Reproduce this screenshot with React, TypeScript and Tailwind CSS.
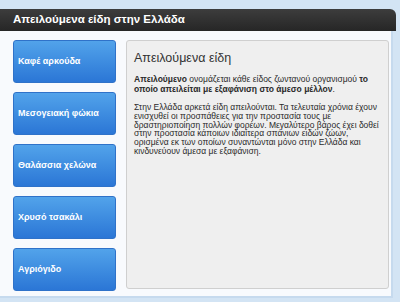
export default function App() {
  const items = ["Καφέ αρκούδα", "Μεσογειακή φώκια", "Θαλάσσια χελώνα", "Χρυσό τσακάλι", "Αγριόγιδο"];

  return (
    <div className="h-[302px] w-[400px] overflow-hidden bg-[#d3e4f4] pt-[9px] pr-[4px] font-['Liberation_Sans',Arial,sans-serif]">
      <div className="flex h-[22px] items-center rounded-tr-[6px] bg-gradient-to-b from-[#3d3d3d] to-[#262626] pl-[13px]">
        <h1 className="text-[11.5px] font-bold text-white">Απειλούμενα είδη στην Ελλάδα</h1>
      </div>
      <div className="mr-[3px] flex h-[267px] gap-[10px] border-b-[2px] border-r-[2px] border-[#c6daee] bg-[#f8fafd] pl-[13px] pt-[9px]">
        <div className="flex w-[103px] flex-col gap-[9px]">
          {items.map((name) => (
            <button
              key={name}
              className="flex h-[43px] items-center rounded-[3px] border border-[#2f72c9] bg-gradient-to-b from-[#52a3ea] to-[#2b76d6] pl-[4px] text-left text-[9px] font-bold text-white"
            >
              {name}
            </button>
          ))}
        </div>
        <div className="h-[249px] w-[263px] rounded-[3px] border border-[#cfcfcf] bg-[#efefef] px-[7px] pt-[7px] text-[#333]">
          <h2 className="text-[12.5px] leading-[20px]">Απειλούμενα είδη</h2>
          <p className="mt-[6px] text-[8.5px] leading-[10px] text-[#2a2a2a]">
            <b>Απειλούμενο</b> ονομάζεται κάθε είδος ζωντανού οργανισμού <b>το οποίο απειλείται με εξαφάνιση στο άμεσο μέλλον</b>.
          </p>
          <p className="mt-[9px] text-[8.5px] leading-[8.8px] text-[#2a2a2a]">
            Στην Ελλάδα αρκετά είδη απειλούνται. Τα τελευταία χρόνια έχουν ενισχυθεί οι προσπάθειες για την προστασία τους με δραστηριοποίηση πολλών φορέων. Μεγαλύτερο βάρος έχει δοθεί στην προστασία κάποιων ιδιαίτερα σπάνιων ειδών ζώων, ορισμένα εκ των οποίων συναντώνται μόνο στην Ελλάδα και κινδυνεύουν άμεσα με εξαφάνιση.
          </p>
        </div>
      </div>
    </div>
  );
}
